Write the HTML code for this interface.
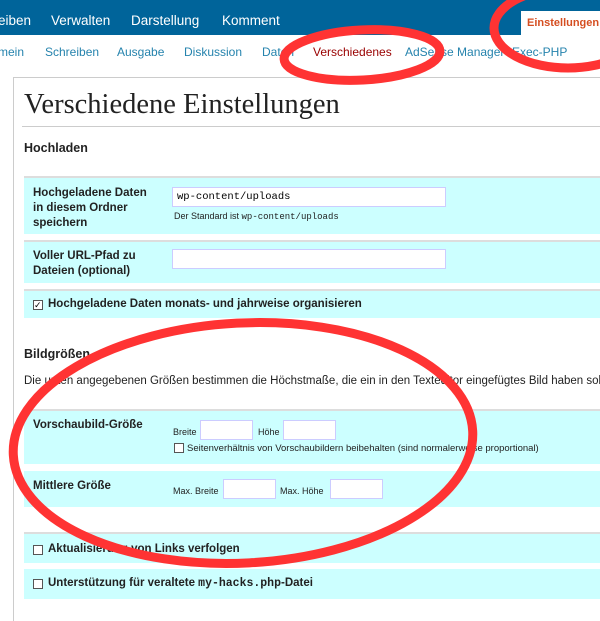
<!DOCTYPE html>
<html><head><meta charset="utf-8"><style>
*{margin:0;padding:0;box-sizing:border-box}
body{width:600px;height:621px;overflow:hidden;background:#fff;font-family:"Liberation Sans",sans-serif;position:relative}
.top{position:absolute;left:0;top:0;width:600px;height:35px;background:#00649a;overflow:hidden}
.top span{position:absolute;top:13px;color:#fff;font-size:13.5px}
.tab{position:absolute;left:521px;top:11px;width:90px;height:25px;background:#fff;color:#d54e21;font-size:11px;font-weight:bold;padding:6px 0 0 6px;white-space:nowrap}
.sub span{position:absolute;top:45px;font-size:12px;color:#2583ad;white-space:nowrap}
.box{position:absolute;left:13px;top:77px;width:587px;height:544px;border-left:1px solid #ccc;border-top:1px solid #ccc}
h1{position:absolute;left:24px;top:89px;font-family:"Liberation Serif",serif;font-weight:normal;font-size:28.5px;color:#222}
.hr{position:absolute;left:22px;top:126px;width:578px;height:1px;background:#ccc}
.h3{position:absolute;left:24px;font-size:12.5px;font-weight:bold;color:#222}
.row{position:absolute;left:24px;width:576px;background:#ccffff;border-top:2px solid #ddd;overflow:hidden}
.lab{position:absolute;left:9px;font-size:11.5px;font-weight:bold;line-height:15px;color:#222;white-space:nowrap}
.inp{position:absolute;background:#fff;border:1px solid #ccccff;height:20px}
.sm{position:absolute;font-size:9px;color:#222;white-space:nowrap}
.mono{font-family:"Liberation Mono",monospace}
.cb{position:absolute;width:10px;height:10px;border:1px solid #555;background:#fff}
</style></head><body>
<div class="top">
<span style="left:-2px">eiben</span><span style="left:51px">Verwalten</span><span style="left:131px">Darstellung</span><span style="left:222px">Komment</span>
<div class="tab">Einstellungen</div>
</div>
<div class="sub">
<span style="left:-2px">mein</span><span style="left:45px">Schreiben</span><span style="left:117px">Ausgabe</span><span style="left:184px">Diskussion</span><span style="left:262px">Daten</span><span style="left:313px;color:#900">Verschiedenes</span><span style="left:405px">AdSense Manager</span><span style="left:512px">Exec-PHP</span>
</div>
<div class="box"></div>
<h1>Verschiedene Einstellungen</h1>
<div class="hr"></div>
<div class="h3" style="top:141px">Hochladen</div>
<div class="row" style="top:176px;height:58px">
<div class="lab" style="top:8px">Hochgeladene Daten<br>in diesem Ordner<br>speichern</div>
<div class="inp" style="left:148px;top:9px;width:274px"><span class="mono" style="font-size:10.5px;position:absolute;left:4px;top:3px">wp-content/uploads</span></div>
<div class="sm" style="left:150px;top:33px">Der Standard ist <span class="mono">wp-content/uploads</span></div>
</div>
<div class="row" style="top:240px;height:43px">
<div class="lab" style="top:7px">Voller URL-Pfad zu<br>Dateien (optional)</div>
<div class="inp" style="left:148px;top:7px;width:274px"></div>
</div>
<div class="row" style="top:289px;height:29px">
<div class="cb" style="left:9px;top:9px;font-size:9px;line-height:8px">✓</div>
<div class="lab" style="left:24px;top:6px;font-size:11.5px">Hochgeladene Daten monats- und jahrweise organisieren</div>
</div>
<div class="h3" style="top:347px">Bildgrößen</div>
<div style="position:absolute;left:24px;top:375px;font-size:11.5px;color:#222;white-space:nowrap">Die unten angegebenen Größen bestimmen die Höchstmaße, die ein in den Texteditor eingefügtes Bild haben soll.</div>
<div class="row" style="top:409px;height:55px">
<div class="lab" style="top:7px">Vorschaubild-Größe</div>
<div class="sm" style="left:149px;top:16px">Breite</div>
<div class="inp" style="left:176px;top:9px;width:53px"></div>
<div class="sm" style="left:234px;top:16px">Höhe</div>
<div class="inp" style="left:259px;top:9px;width:53px"></div>
<div class="cb" style="left:150px;top:32px"></div>
<div class="sm" style="left:163px;top:32px;font-size:9.5px">Seitenverhältnis von Vorschaubildern beibehalten (sind normalerweise proportional)</div>
</div>
<div class="row" style="top:471px;height:36px;border-top:none">
<div class="lab" style="top:8px">Mittlere Größe</div>
<div class="sm" style="left:149px;top:15px">Max. Breite</div>
<div class="inp" style="left:199px;top:8px;width:53px"></div>
<div class="sm" style="left:256px;top:15px">Max. Höhe</div>
<div class="inp" style="left:306px;top:8px;width:53px"></div>
</div>
<div class="row" style="top:532px;height:31px">
<div class="cb" style="left:9px;top:11px"></div>
<div class="lab" style="left:24px;top:8px">Aktualisierung von Links verfolgen</div>
</div>
<div class="row" style="top:569px;height:30px;border-top:none">
<div class="cb" style="left:9px;top:10px"></div>
<div class="lab" style="left:24px;top:7px">Unterstützung für veraltete <span class="mono">my-hacks.php</span>-Datei</div>
</div>
<svg style="position:absolute;left:0;top:0" width="600" height="621">
<g fill="none" stroke="#ff3333" stroke-width="9">
<ellipse cx="362" cy="55" rx="78" ry="25" transform="rotate(-3 362 55)"/>
<ellipse cx="568" cy="28" rx="74" ry="40"/>
<ellipse cx="243" cy="443" rx="230" ry="120" transform="rotate(-3 243 443)"/>
</g></svg>
</body></html>
